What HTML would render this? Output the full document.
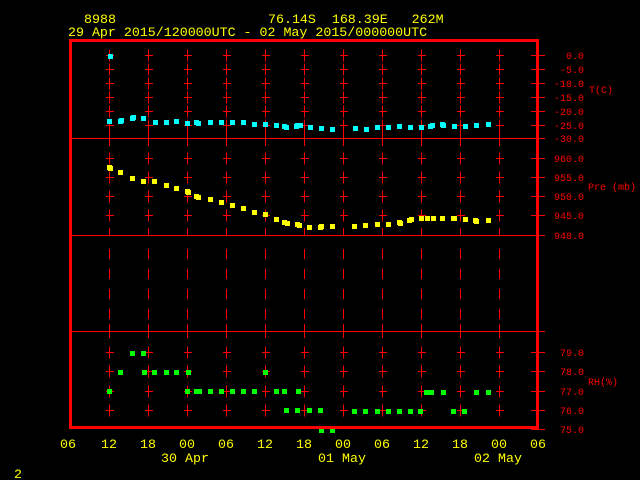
<!DOCTYPE html>
<html><head><meta charset="utf-8">
<style>
html,body{margin:0;padding:0;background:#000;width:640px;height:480px;overflow:hidden}
svg{display:block}
text{font-family:"Liberation Mono",monospace}
.y{fill:#ffff00;font-size:13.3px}
.r{fill:#ff0000;font-size:10px}
</style></head><body>
<svg id="s" width="640" height="480" viewBox="0 0 640 480" xmlns="http://www.w3.org/2000/svg" shape-rendering="crispEdges">
<rect width="640" height="480" fill="#000"/>
<g id="grid" stroke="#ff0000" stroke-width="1"></g>
<g id="pts"></g>
<rect x="70.5" y="40.5" width="467" height="387" fill="none" stroke="#ff0000" stroke-width="3"/>
<text class="y" x="84" y="23">8988</text>
<text class="y" x="268" y="23" xml:space="preserve">76.14S  168.39E   262M</text>
<text class="y" x="68" y="36">29 Apr 2015/120000UTC - 02 May 2015/000000UTC</text>
<g class="r" text-anchor="end">
<text x="584" y="59">0.0</text>
<text x="584" y="73">-5.0</text>
<text x="584" y="87">-10.0</text>
<text x="584" y="101">-15.0</text>
<text x="584" y="115">-20.0</text>
<text x="584" y="129">-25.0</text>
<text x="584" y="142">-30.0</text>
<text x="584" y="162">960.0</text>
<text x="584" y="181">955.0</text>
<text x="584" y="200">950.0</text>
<text x="584" y="219">945.0</text>
<text x="584" y="239">940.0</text>
<text x="584" y="356">79.0</text>
<text x="584" y="375">78.0</text>
<text x="584" y="395">77.0</text>
<text x="584" y="414">76.0</text>
<text x="584" y="433">75.0</text>
</g>
<text class="r" x="589" y="93">T(C)</text>
<text class="r" x="588" y="190" xml:space="preserve">Pre (mb)</text>
<text class="r" x="588" y="385">RH(%)</text>
<g class="y" text-anchor="middle">
<text x="68" y="448">06</text><text x="109" y="448">12</text><text x="148" y="448">18</text>
<text x="187" y="448">00</text><text x="226" y="448">06</text><text x="265" y="448">12</text>
<text x="304" y="448">18</text><text x="343" y="448">00</text><text x="382" y="448">06</text>
<text x="421" y="448">12</text><text x="460" y="448">18</text><text x="499" y="448">00</text>
<text x="538" y="448">06</text>
<text x="185" y="462">30 Apr</text><text x="342" y="462">01 May</text><text x="498" y="462">02 May</text>
</g>
<text class="y" x="14" y="478">2</text>
</svg>
<script>
var NS="http://www.w3.org/2000/svg";
var g=document.getElementById('grid'),p=document.getElementById('pts');
function L(x1,y1,x2,y2){var l=document.createElementNS(NS,'line');l.setAttribute('x1',x1);l.setAttribute('y1',y1);l.setAttribute('x2',x2);l.setAttribute('y2',y2);g.appendChild(l);}
var xs=[109,148,187,226,265,304,343,382,421,460,499];
var crossY=[55,69,83,97,111,125,158,177,196,215,352,371,391,410];
xs.forEach(function(x){
 var xx=x+0.5;
 crossY.forEach(function(y){L(xx,y-5.5,xx,y+6.5);L(x-3,y+0.5,x+5,y+0.5);});
 L(xx,131,xx,139);L(xx,139,xx,146);
 L(xx,228,xx,236);
 [254,274,294,314].forEach(function(y){L(xx,y-5,xx,y+5);});
 L(xx,324,xx,338);
});
// horizontal lines
L(71,138.5,545,138.5);L(71,235.5,545,235.5);L(71,331.5,545,331.5);
// right ticks
[55,69,83,97,111,125,158,177,196,215,352,371,391,410,429].forEach(function(y){L(531,y+0.5,545,y+0.5);});
function P(arr,c){arr.forEach(function(a){var r=document.createElementNS(NS,'rect');r.setAttribute('x',a[0]-2);r.setAttribute('y',a[1]-2);r.setAttribute('width',5);r.setAttribute('height',5);r.setAttribute('fill',c);p.appendChild(r);});}
P([[110,56],[109,121],[120,121],[121,120],[132,118],[133,117],[143,118],[155,122],[166,122],[176,121],[187,123],[196,122],[198,123],[210,122],[221,122],[232,122],[243,122],[254,124],[265,124],[276,125],[284,126],[286,127],[296,126],[297,125],[300,125],[310,127],[321,128],[332,129],[355,128],[366,129],[377,127],[388,127],[399,126],[410,127],[421,127],[430,126],[432,125],[442,124],[443,125],[454,126],[465,126],[476,125],[488,124]],'#00ffff');
P([[109,167],[110,168],[120,172],[132,178],[143,181],[154,181],[166,185],[176,188],[187,191],[188,192],[196,196],[198,197],[210,199],[221,202],[232,205],[243,208],[254,212],[265,214],[276,219],[284,222],[287,223],[297,224],[299,225],[309,227],[320,227],[321,226],[332,226],[354,226],[365,225],[377,224],[388,224],[399,222],[400,223],[409,220],[411,219],[421,218],[427,218],[433,218],[442,218],[453,218],[454,218],[465,219],[475,220],[476,221],[488,220]],'#ffff00');
P([[132,353],[143,353],[120,372],[144,372],[154,372],[166,372],[176,372],[188,372],[265,372],[109,391],[187,391],[196,391],[199,391],[210,391],[221,391],[232,391],[243,391],[254,391],[276,391],[284,391],[298,391],[286,410],[297,410],[309,410],[320,410],[354,411],[365,411],[377,411],[388,411],[399,411],[410,411],[420,411],[453,411],[464,411],[426,392],[431,392],[443,392],[476,392],[488,392],[321,430],[332,430]],'#00ff00');
</script>
</body></html>
